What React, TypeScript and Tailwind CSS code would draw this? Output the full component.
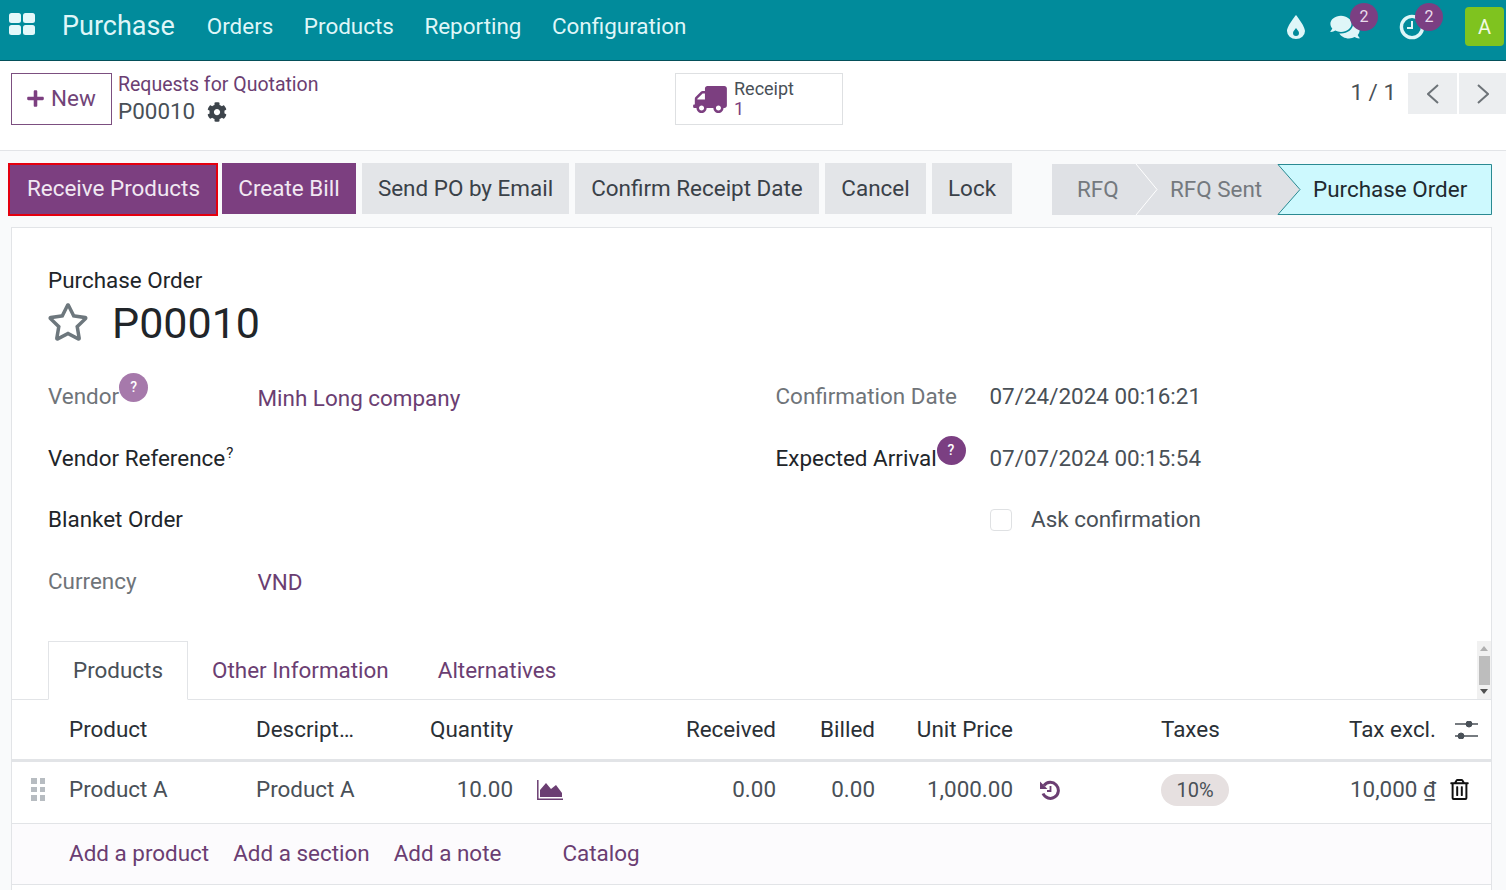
import { FaPlus, FaCog, FaTruck, FaRegStar, FaComments, FaRegTrashAlt } from 'react-icons/fa'

const rowGrid = 'grid grid-cols-[57px_187px_174px_83px_127px_136px_99px_138px_148px_175px_100px_54px] items-center'

function NavBadge({ n }: { n: number }) {
  return (
    <span className="absolute -top-[11px] -right-[18px] w-[28px] h-[28px] rounded-full bg-[#7b3f82] text-[#eadcec] text-[16px] flex items-center justify-center">{n}</span>
  )
}

function HelpDot({ light }: { light?: boolean }) {
  return (
    <span className={`inline-flex w-[29px] h-[29px] rounded-full text-white text-[14px] font-medium items-center justify-center ${light ? 'bg-[#a679ab]' : 'bg-[#7b3f82]'}`}>?</span>
  )
}

function ActionBtn({ children, primary, width }: { children: string; primary?: boolean; width: string }) {
  return (
    <button className={`h-[51px] ${width} ${primary ? 'bg-[#7c3f80] text-[#f1e8f2]' : 'bg-[#e3e5e8] text-[#3a4148]'}`}>{children}</button>
  )
}

function FormRow({ label, value, muted, link, help, sup, valueClass }: { label: string; value: string; muted?: boolean; link?: boolean; help?: 'light' | 'dark'; sup?: boolean; valueClass?: string }) {
  return (
    <div className="flex items-center h-[61.5px]">
      <div className={`relative w-[209.5px] shrink-0 whitespace-nowrap ${muted ? 'text-[#6f7479]' : 'text-[#212529]'}`}>
        {label}
        {sup && <sup className="text-[15px] ml-[1px]">?</sup>}
        {help && <span className="absolute top-[-12px]"><HelpDot light={help === 'light'} /></span>}
      </div>
      <div className={`${link ? 'text-[#6b3e72]' : 'text-[#495057]'} ${valueClass ?? ''}`}>{value}</div>
    </div>
  )
}

export default function App() {
  return (
    <div className="w-[1506px] h-[890px] overflow-hidden bg-[#f9fafb] text-[22.45px] leading-[1.2]" style={{ fontFamily: 'Roboto, sans-serif' }}>
      {/* navbar */}
      <div className="h-[61px] bg-[#018b9b] border-b border-[#04505a] flex items-center text-[#dff6f8]">
        <svg viewBox="0 0 26 22" className="ml-[9px] w-[26px] h-[22px] -mt-[13px]" fill="#e4f8fa">
          <rect x="0" y="0" width="12" height="10" rx="2.5" />
          <rect x="14" y="0" width="12" height="10" rx="2.5" />
          <rect x="0" y="12" width="12" height="10" rx="2.5" />
          <rect x="14" y="12" width="12" height="10" rx="2.5" />
        </svg>
        <span className="ml-[27px] text-[27px] -mt-[7px]">Purchase</span>
        <div className="flex ml-[32px] gap-[30.5px] -mt-[7px]">
          <span>Orders</span>
          <span>Products</span>
          <span>Reporting</span>
          <span>Configuration</span>
        </div>
        <div className="ml-auto flex items-center pb-[7px]">
          <svg viewBox="0 0 18 24" className="w-[18px] h-[24px]" fill="#dff6f8" fillRule="evenodd">
            <path d="M9 0C9 0 0 11 0 16a9 8 0 0 0 18 0C18 11 9 0 9 0ZM9 13c-1.5 2-3 3.5-3 5a3 3 0 0 0 6 0c0-1.5-1.5-3-3-5Z" />
          </svg>
          <span className="relative ml-[25px]"><FaComments className="w-[30px] h-[26px]" /><NavBadge n={2} /></span>
          <span className="relative ml-[39px]">
            <svg viewBox="0 0 26 26" className="w-[26px] h-[26px]" fill="none" stroke="#dff6f8" strokeWidth="3.4">
              <circle cx="13" cy="13" r="10.6" />
              <path d="M13 7v7H8" strokeWidth="2" />
            </svg>
            <NavBadge n={2} />
          </span>
          <span className="ml-[40px] mr-[2px] w-[39px] h-[39px] rounded-[4px] bg-[#7fc31f] text-[#f2fae4] flex items-center justify-center text-[20px]">A</span>
        </div>
      </div>

      {/* control panel */}
      <div className="h-[90px] bg-white border-b border-[#e2e4e7] flex pt-[12px] pl-[11px]">
        <button className="w-[101px] h-[52px] pb-[2px] pr-[1px] border border-[#7c4f80] text-[#714478] flex items-center justify-center gap-[6px]">
          <FaPlus className="w-[19px] h-[19px] text-[#7c3f80]" />New
        </button>
        <div className="ml-[6px] w-[557px]">
          <div className="text-[19.5px] text-[#6b3e72] leading-[24px]">Requests for Quotation</div>
          <div className="flex items-center text-[#495057] leading-[29px]">
            P00010
            <FaCog className="ml-[12px] w-[20px] h-[20px] text-[#3d444b]" />
          </div>
        </div>
        <div className="w-[168px] h-[52px] border border-[#dee0e2] flex items-center pl-[17px]">
          <FaTruck className="w-[34px] h-[27px] text-[#7c3f80] -scale-x-100" />
          <div className="ml-[7px] text-[18px] leading-[20px]">
            <div className="text-[#495057]">Receipt</div>
            <div className="text-[#7c3f80]">1</div>
          </div>
        </div>
        <div className="ml-auto flex items-start">
          <span className="text-[#495057] mt-[6px] mr-[12px]">1 / 1</span>
          <button className="w-[49px] h-[41px] bg-[#eceef0] flex items-center justify-center mr-[2px]">
            <svg viewBox="0 0 12 20" className="w-[12px] h-[20px]" fill="none" stroke="#6d7378" strokeWidth="2"><path d="M11 1 1 10l10 9" /></svg>
          </button>
          <button className="w-[47px] h-[41px] bg-[#eceef0] flex items-center justify-center">
            <svg viewBox="0 0 12 20" className="w-[12px] h-[20px]" fill="none" stroke="#6d7378" strokeWidth="2"><path d="m1 1 10 9-10 9" /></svg>
          </button>
        </div>
      </div>

      {/* status bar */}
      <div className="h-[76px] flex items-start pt-[12px] pl-[8px]">
        <div className="flex gap-[6px] w-[1004px]">
          <button className="mr-[-2px] h-[53px] w-[210px] pb-[2px] pl-[1px] bg-[#7c3f80] text-[#f1e8f2] border-[2px] border-[#e4000f]">Receive Products</button>
          <ActionBtn primary width="w-[134px]">Create Bill</ActionBtn>
          <ActionBtn width="w-[207px]">Send PO by Email</ActionBtn>
          <ActionBtn width="w-[244px]">Confirm Receipt Date</ActionBtn>
          <ActionBtn width="w-[101px]">Cancel</ActionBtn>
          <ActionBtn width="w-[80px]">Lock</ActionBtn>
        </div>
        <div className="relative ml-[40px] mt-[1px] h-[51px] w-[440px] flex items-center bg-[#dfe1e5] text-[#74797e]">
          <svg viewBox="0 0 440 51" className="absolute inset-0 w-[440px] h-[51px]">
            <path d="M226 .5H439.5V50.5H226L248 25.5Z" fill="#cdf9fe" stroke="#2a8a92" strokeWidth="1" />
            <path d="M84 0 105 25.5 84 51" fill="none" stroke="#fff" strokeWidth="1" />
          </svg>
          <span className="relative w-[84px] pl-[25px]">RFQ</span>
          <span className="relative w-[142px] pl-[34px]">RFQ Sent</span>
          <span className="relative pl-[35px] text-[#1f2a30]">Purchase Order</span>
        </div>
      </div>

      {/* sheet */}
      <div className="ml-[11px] w-[1481px] h-[700px] bg-white border border-[#e2e4e7]">
        <div className="pt-[38px] pl-[36px] text-[#212529]">
          <div className="leading-[28px]">Purchase Order</div>
          <div className="flex items-center mt-[3px]">
            <FaRegStar className="w-[42px] h-[40px] -mt-[2px] -ml-[1px] mr-[1px] text-[#6d777d]" />
            <span className="ml-[22px] text-[43px] leading-[52px]">P00010</span>
          </div>
          <div className="grid grid-cols-[727.5px_1fr] mt-[17px]">
            <div>
              <FormRow label="Vendor" value="Minh Long company" muted link help="light" valueClass="mt-[4px]" />
              <FormRow label="Vendor Reference" value="" sup />
              <FormRow label="Blanket Order" value="" />
              <FormRow label="Currency" value="VND" muted link valueClass="mt-[2px]" />
            </div>
            <div className="[&>div>div:first-child]:w-[214px]">
              <div className="flex items-center h-[61.5px]">
                <div className="text-[#6f7479] whitespace-nowrap">Confirmation Date</div>
                <div className="text-[#495057]">07/24/2024 00:16:21</div>
              </div>
              <div className="flex items-center h-[61.5px]">
                <div className="relative text-[#212529] whitespace-nowrap">
                  Expected Arrival
                  <span className="absolute left-[161px] top-[-11px]"><HelpDot /></span>
                </div>
                <div className="text-[#495057]">07/07/2024 00:15:54</div>
              </div>
              <div className="flex items-center h-[61.5px]">
                <div />
                <span className="w-[22px] h-[22px] rounded-[4px] border border-[#dfe1e3] mr-[19.5px]" />
                <span className="text-[#495057]">Ask confirmation</span>
              </div>
            </div>
          </div>
        </div>

        {/* tabs */}
        <div className="relative mt-[29px] h-[59px] flex items-end border-b border-[#e2e4e7] pl-[36px]">
          <div className="h-[59px] w-[140px] border border-b-white border-[#e2e4e7] bg-white text-[#495057] flex items-center justify-center -mb-px">Products</div>
          <span className="ml-[24px] h-[58px] flex items-center text-[#6b3e72]">Other Information</span>
          <span className="ml-[49px] h-[58px] flex items-center text-[#6b3e72]">Alternatives</span>
          <div className="absolute right-0 top-0 w-[14px] h-[58px] bg-[#f1f1f1] flex flex-col items-center justify-between py-[5px]">
            <svg viewBox="0 0 8 5" className="w-[8px] h-[5px]" fill="#b0b0b0"><path d="M4 0 8 5H0Z" /></svg>
            <span className="w-[11px] h-[29px] bg-[#bdbdbd]" />
            <svg viewBox="0 0 8 5" className="w-[8px] h-[5px]" fill="#505050"><path d="M0 0H8L4 5Z" /></svg>
          </div>
        </div>

        {/* table */}
        <div className={`${rowGrid} h-[62px] border-b-[3px] border-[#e2e4e7] text-[#2a3036]`}>
          <div />
          <div>Product</div>
          <div>Descript…</div>
          <div className="text-right">Quantity</div>
          <div />
          <div className="text-right">Received</div>
          <div className="text-right">Billed</div>
          <div className="text-right">Unit Price</div>
          <div />
          <div>Taxes</div>
          <div className="text-right">Tax excl.</div>
          <div className="pl-[19px]">
            <svg viewBox="0 0 23 18" className="w-[23px] h-[18px]" fill="#495057" stroke="#495057">
              <path d="M0 3H23M0 15H23" strokeWidth="1.4" fill="none" />
              <circle cx="14" cy="3" r="3" />
              <circle cx="6" cy="15" r="3" />
            </svg>
          </div>
        </div>
        <div className={`${rowGrid} h-[62px] pb-[6px] border-b border-[#e2e4e7] text-[#495057]`}>
          <div className="pl-[19px]">
            <div className="grid grid-cols-2 gap-[3px] w-[14px]">
              {[0, 1, 2, 3, 4, 5].map(i => <span key={i} className="w-[5.5px] h-[5.5px] bg-[#b7bcc1]" />)}
            </div>
          </div>
          <div>Product A</div>
          <div>Product A</div>
          <div className="text-right">10.00</div>
          <div className="pl-[24px]">
            <svg viewBox="0 0 26 20" className="w-[26px] h-[20px]">
              <path d="M.8 0V19.2H26" fill="none" stroke="#6b3e72" strokeWidth="1.5" />
              <path d="M3 17V10L9 3l5 6 5-4 6 8v4Z" fill="#6b3e72" />
            </svg>
          </div>
          <div className="text-right">0.00</div>
          <div className="text-right">0.00</div>
          <div className="text-right">1,000.00</div>
          <div className="pl-[27px]">
            <svg viewBox="0 0 20 20" className="w-[20px] h-[20px]" fill="none" stroke="#6b3e72">
              <path d="M0 1.5V9h7.5Z" fill="#6b3e72" stroke="none" />
              <path d="M4 5.5A8 8 0 1 1 3 13.5" strokeWidth="3" />
              <path d="M10.5 6v5H7" strokeWidth="1.8" />
            </svg>
          </div>
          <div><span className="inline-block w-[68px] h-[32px] leading-[32px] rounded-full bg-[#e6e0e0] text-center text-[20px] text-[#495057]">10%</span></div>
          <div className="text-right whitespace-nowrap">10,000 <span className="underline">₫</span></div>
          <div className="pl-[14px]"><FaRegTrashAlt className="w-[19px] h-[21px] text-[#111]" /></div>
        </div>
        <div className="h-[61px] pb-[2px] bg-[#fcfbfd] border-b border-[#e2e4e7] flex items-center pl-[57px] text-[#6b3e72]">
          <span>Add a product</span>
          <span className="ml-[24px]">Add a section</span>
          <span className="ml-[24px]">Add a note</span>
          <span className="ml-[61px]">Catalog</span>
        </div>
      </div>
    </div>
  )
}
